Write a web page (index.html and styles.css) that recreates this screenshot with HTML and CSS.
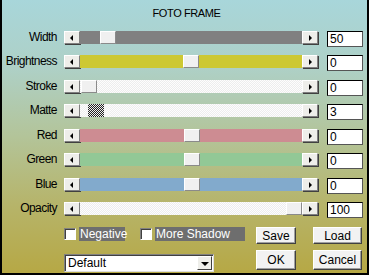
FILE: index.html
```html
<!DOCTYPE html>
<html>
<head>
<meta charset="utf-8">
<link rel="stylesheet" href="styles.css">
</head>
<body>
<div class="dlg">
  <div class="title">FOTO FRAME</div>
  <div class="rows">
    <div class="row"><span class="lbl">Width</span><div class="slider"><span class="abtn left"></span><div class="track t-gray"><span class="thumb" style="left:20px"></span></div><span class="abtn right"></span></div><div class="num">50</div></div>
    <div class="row"><span class="lbl">Brightness</span><div class="slider"><span class="abtn left"></span><div class="track t-yellow"><span class="thumb" style="left:103px"></span></div><span class="abtn right"></span></div><div class="num">0</div></div>
    <div class="row"><span class="lbl">Stroke</span><div class="slider"><span class="abtn left"></span><div class="track t-white"><span class="thumb" style="left:1px"></span></div><span class="abtn right"></span></div><div class="num">0</div></div>
    <div class="row"><span class="lbl">Matte</span><div class="slider"><span class="abtn left"></span><div class="track t-white"><span class="thumb hatch" style="left:8px"></span></div><span class="abtn right"></span></div><div class="num">3</div></div>
    <div class="row"><span class="lbl">Red</span><div class="slider"><span class="abtn left"></span><div class="track t-red"><span class="thumb" style="left:104px"></span></div><span class="abtn right"></span></div><div class="num">0</div></div>
    <div class="row"><span class="lbl">Green</span><div class="slider"><span class="abtn left"></span><div class="track t-green"><span class="thumb" style="left:104px"></span></div><span class="abtn right"></span></div><div class="num">0</div></div>
    <div class="row"><span class="lbl">Blue</span><div class="slider"><span class="abtn left"></span><div class="track t-blue"><span class="thumb" style="left:104px"></span></div><span class="abtn right"></span></div><div class="num">0</div></div>
    <div class="row"><span class="lbl">Opacity</span><div class="slider"><span class="abtn left"></span><div class="track t-white"><span class="thumb" style="left:206px"></span></div><span class="abtn right"></span></div><div class="num">100</div></div>
  </div>
  <div class="brow one">
    <span class="chk"></span><span class="clabel neg">Negative</span>
    <span class="chk c2"></span><span class="clabel more">More Shadow</span>
    <button class="pbtn save">Save</button>
    <button class="pbtn load">Load</button>
  </div>
  <div class="brow two">
    <div class="combo"><span class="ctext">Default</span><span class="carrow"></span></div>
    <button class="pbtn ok">OK</button>
    <button class="pbtn cancel">Cancel</button>
  </div>
</div>
</body>
</html>
```
FILE: styles.css
```css
html, body { margin: 0; padding: 0; }
body { width: 369px; height: 275px; overflow: hidden; font-family: "Liberation Sans", Arial, sans-serif; font-size: 11px; color: #000; }
.dlg {
  box-sizing: border-box;
  width: 369px; height: 275px;
  border-left: 2px solid #000; border-right: 2px solid #000; border-bottom: 2px solid #000;
  background: linear-gradient(#a8d6da 0%, #aed0c6 25%, #b3c499 50%, #b6b46a 75%, #b6a845 100%);
}
.title { height: 14px; line-height: 14px; padding-top: 6px; text-align: center; letter-spacing: -0.4px; padding-left: 4px; }
.rows { margin-top: 11px; }
.row { display: flex; align-items: flex-start; height: 24.43px; }
.lbl { width: 55px; text-align: right; line-height: 13px; height: 13px; font-size: 12px; letter-spacing: -0.55px; }
.slider { display: flex; width: 254px; height: 13px; margin-left: 7px; }
.abtn {
  position: relative; box-sizing: border-box; width: 16px; height: 13px; flex: none;
  background: #eeeeea;
  border-top: 1px solid #fff; border-left: 1px solid #fff;
  border-right: 1px solid #808080; border-bottom: 1px solid #808080;
  box-shadow: 1px 1px 0 #404040;
}
.abtn::after { content: ""; position: absolute; top: 3px; width: 0; height: 0; border-top: 3px solid transparent; border-bottom: 3px solid transparent; }
.abtn.left::after { left: 5px; border-right: 3px solid #000; }
.abtn.right::after { left: 6px; border-left: 3px solid #000; }
.track { position: relative; flex: 1; height: 13px; }
.t-gray { background: #808080; }
.t-yellow { background: #cdc832; }
.t-red { background: #cd8c92; }
.t-green { background: #92c896; }
.t-blue { background: #82aacc; }
.t-white { background: #fbfbfb repeating-conic-gradient(#ededed 0 25%, #fdfdfd 0 50%) 0 0 / 2px 2px; }
.thumb {
  position: absolute; top: 0; box-sizing: border-box; width: 16px; height: 13px;
  background: #f0f0f0;
  border-top: 1px solid #fff; border-left: 1px solid #fff;
  border-right: 1px solid #8a8a8a; border-bottom: 1px solid #8a8a8a;
}
.thumb.hatch { border: none; background: repeating-conic-gradient(#222 0 25%, #eee 0 50%) 0 0 / 2px 2px; }
.num {
  box-sizing: border-box; width: 36px; height: 16px; margin-left: 9px;
  background: #fff; border: 1px solid #000; border-right-color: #555; border-bottom-color: #555;
  line-height: 14px; padding-left: 2px; font-size: 12px;
}
.brow { display: flex; align-items: flex-start; }
.brow.one { margin-top: 1px; height: 17px; }
.chk {
  box-sizing: border-box; width: 12px; height: 12px; margin-top: 1px; margin-left: 62px;
  background: #fff; border-top: 1px solid #808080; border-left: 1px solid #808080;
  border-right: 1px solid #fff; border-bottom: 1px solid #fff;
  box-shadow: inset 1px 1px 0 #404040;
}
.chk.c2 { margin-left: 15px; }
.clabel { background: #6e6e6e; color: #fff; height: 14px; line-height: 14px; margin-left: 3px; font-size: 12px; }
.neg { width: 45px; padding-left: 1px; }
.more { width: 89px; padding-left: 1px; }
.pbtn {
  box-sizing: border-box; padding: 0; margin: 0; font-family: inherit; font-size: 12px; color: #000;
  background: #f2f2f2;
  border-top: 1px solid #fff; border-left: 1px solid #fff;
  border-right: 1px solid #404040; border-bottom: 1px solid #404040;
  box-shadow: inset -1px -1px 0 #a0a0a0;
}
.save { width: 40px; height: 17px; margin-left: 11px; }
.load { width: 49px; height: 17px; margin-left: 17px; }
.brow.two { margin-top: 6px; }
.combo {
  box-sizing: border-box; display: flex; justify-content: space-between; align-items: center;
  width: 150px; height: 18px; margin-top: 4px; margin-left: 62px;
  background: #fff; border-top: 1px solid #808080; border-left: 1px solid #808080;
  border-right: 1px solid #ddd; border-bottom: 1px solid #ddd; box-shadow: inset 1px 1px 0 #404040;
}
.ctext { padding-left: 3px; font-size: 12px; }
.carrow {
  position: relative; box-sizing: border-box; width: 15px; height: 14px; margin-right: 1px;
  background: #eeeeea; border-top: 1px solid #fff; border-left: 1px solid #fff;
  border-right: 1px solid #404040; border-bottom: 1px solid #404040;
}
.carrow::after { content: ""; position: absolute; left: 3px; top: 5px; border-left: 4px solid transparent; border-right: 4px solid transparent; border-top: 4px solid #000; }
.ok { width: 40px; height: 20px; margin-left: 42px; }
.cancel { width: 49px; height: 20px; margin-left: 17px; }
```
